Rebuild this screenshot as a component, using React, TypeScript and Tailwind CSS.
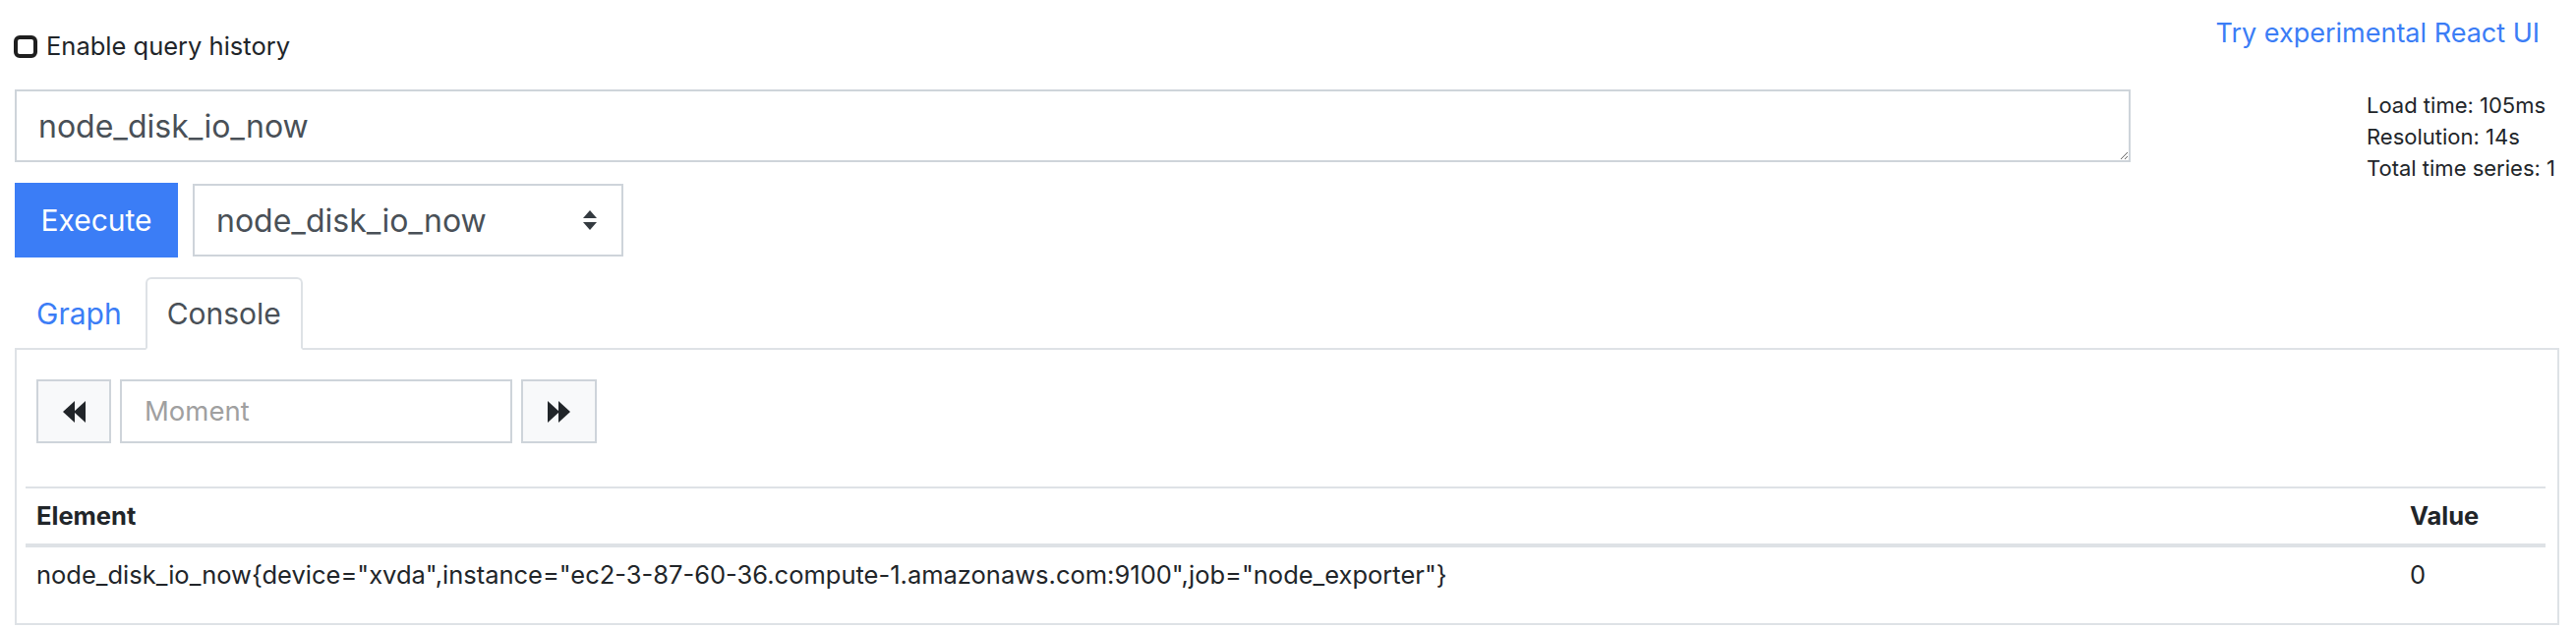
import React from "react";

// query page: expression box, execute row, console tab with one result
function BackIcon() {
	return (
		<svg width="23" height="22" viewBox="0 0 23 22" fill="#212529">
			<polygon points="0,11 12,0 12,22" />
			<polygon points="11,11 23,0 23,22" />
		</svg>
	);
}

function ForwardIcon() {
	return (
		<svg width="23" height="22" viewBox="0 0 23 22" fill="#212529">
			<polygon points="0,0 12,11 0,22" />
			<polygon points="11,0 23,11 11,22" />
		</svg>
	);
}

function SelectArrows() {
	return (
		<svg width="14" height="20" viewBox="0 0 14 20" fill="#343a40">
			<polygon points="7,0 14,8 0,8" />
			<polygon points="0,12 14,12 7,20" />
		</svg>
	);
}

export default function App() {
	const series = 'node_disk_io_now{device="xvda",instance="ec2-3-87-60-36.compute-1.amazonaws.com:9100",job="node_exporter"}';

	return (
		<div className="w-[2620px] h-[640px] bg-white font-['Inter',sans-serif] text-[#212529] overflow-hidden">
			{/* Top section */}
			<div className="flex">
				<div className="ml-[15px] w-[2152px] flex flex-col">
					<label className="mt-[29px] h-[36px] flex items-center text-[25.5px] leading-[36px]">
						<span className="-ml-px w-[24px] h-[23px] border-[4px] border-[#1f1f1f] rounded-[6px] box-border" />
						<span className="ml-[9px]">Enable query history</span>
					</label>

					<textarea
						className="mt-[26px] block w-full h-[74px] box-border border-2 border-[#ced4da] pl-[22px] pt-[13px] pb-[12px] text-[32px] leading-[45px] text-[#495057] outline-none"
						defaultValue="node_disk_io_now"
					/>

					<div className="mt-[21px] flex items-center gap-[15px]">
						<button className="w-[166px] h-[76px] bg-[#3b7df6] text-white text-[30px] leading-[45px]">
							Execute
						</button>
						<div className="w-[438px] h-[74px] box-border border-2 border-[#ced4da] flex items-center justify-between pl-[22px] pr-[25px] text-[32px] leading-[45px] text-[#495057]">
							<span>node_disk_io_now</span>
							<SelectArrows />
						</div>
					</div>
				</div>

				<div className="flex-1 flex flex-col">
					<div className="mt-[14px] h-[39px] text-right pr-[37px] text-[27px] leading-[39px] text-[#3b7df6]">
						Try experimental React UI
					</div>
					<div className="mt-[38px] ml-[240px] text-[22px] leading-[32px]">
						<div>Load time: 105ms</div>
						<div>Resolution: 14s</div>
						<div>Total time series: 1</div>
					</div>
				</div>
			</div>

			{/* Tabs */}
			<div className="ml-[15px] mt-[20px] flex gap-[2px] relative z-10">
				<div className="px-[20px] pt-[13px] pb-[10px] border-2 border-transparent text-[30px] leading-[45px] text-[#3b7df6]">
					Graph
				</div>
				<div className="px-[20px] pt-[13px] pb-[10px] border-2 border-[#dee2e6] border-b-white rounded-t-[6px] bg-white mb-[-2px] text-[30px] leading-[45px] text-[#495057]">
					Console
				</div>
			</div>

			{/* Console panel */}
			<div className="ml-[15px] w-[2588px] h-[282px] box-border border-2 border-[#dee2e6] pl-[9px] pr-[12px] pt-[30px]">
				<div className="ml-[11px] flex items-center gap-[9px]">
					<button className="w-[76px] h-[65px] box-border border-2 border-[#ced4da] bg-[#f8f9fa] flex items-center justify-center">
						<BackIcon />
					</button>
					<div className="w-[399px] h-[65px] box-border border-2 border-[#ced4da] flex items-center pl-[23px] text-[27.5px] text-[#a0a0a0]">
						Moment
					</div>
					<button className="w-[77px] h-[65px] box-border border-2 border-[#ced4da] bg-[#f8f9fa] flex items-center justify-center">
						<ForwardIcon />
					</button>
				</div>

				<div className="mt-[44px] border-t-2 border-[#dee2e6] text-[25.5px] leading-[36px]">
					<div className="grid grid-cols-[1fr_149px] border-b-4 border-[#dee2e6] font-bold">
						<div className="pl-[11px] py-[10px]">Element</div>
						<div className="pl-[11px] py-[10px]">Value</div>
					</div>
					<div className="grid grid-cols-[1fr_149px]">
						<div className="pl-[11px] py-[10px] whitespace-nowrap">{series}</div>
						<div className="pl-[11px] py-[10px]">0</div>
					</div>
				</div>
			</div>
		</div>
	);
}
